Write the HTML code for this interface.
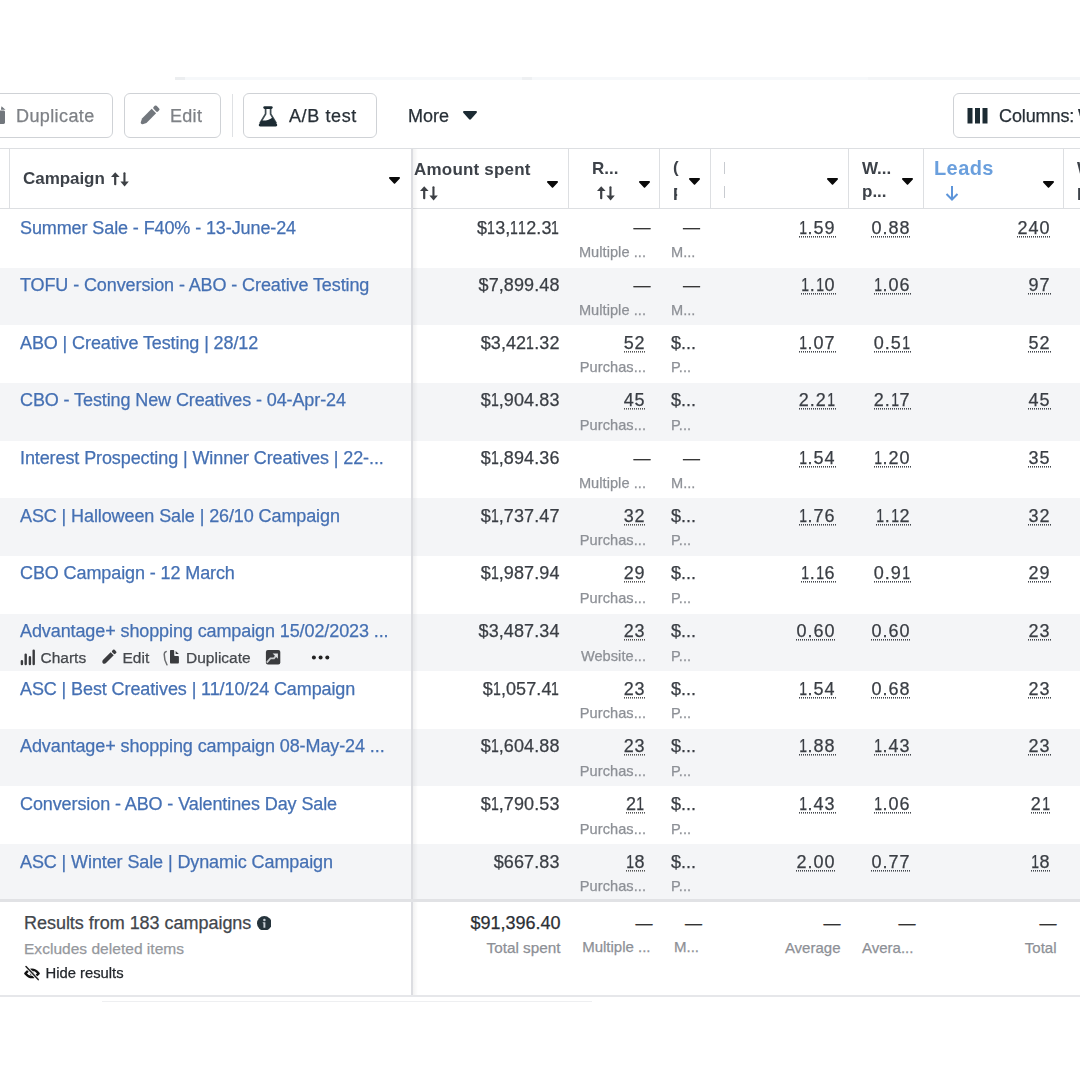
<!DOCTYPE html>
<html><head><meta charset="utf-8"><style>
html,body{margin:0;padding:0;}
body{width:1080px;height:1080px;position:relative;overflow:hidden;background:#fff;filter:blur(0.4px);font-family:"Liberation Sans", sans-serif;}
.t{position:absolute;white-space:nowrap;-webkit-text-stroke:0.25px currentColor;}
.r{position:absolute;}
</style></head><body>
<div class="r" style="left:175px;top:77px;width:905px;height:3px;background:#f6f8fa;"></div>
<div class="r" style="left:175px;top:77px;width:10px;height:3px;background:#eceef0;"></div>
<div class="r" style="left:522px;top:77px;width:10px;height:3px;background:#eef0f2;"></div>
<div class="r" style="left:868px;top:77px;width:212px;height:3px;background:#f3f5f7;"></div>
<div class="r" style="left:-20px;top:93px;width:133px;height:45px;border:1px solid #cfd2d6;border-radius:6px;box-sizing:border-box;background:#fff;"></div>
<div class="r" style="left:124px;top:93px;width:97px;height:45px;border:1px solid #cfd2d6;border-radius:6px;box-sizing:border-box;background:#fff;"></div>
<div class="r" style="left:232px;top:94px;width:1px;height:43px;background:#dfe1e4;"></div>
<div class="r" style="left:243px;top:93px;width:134px;height:45px;border:1px solid #cfd2d6;border-radius:6px;box-sizing:border-box;background:#fff;"></div>
<div class="r" style="left:953px;top:93px;width:160px;height:45px;border:1px solid #cfd2d6;border-radius:6px;box-sizing:border-box;background:#fff;"></div>
<div class="t" style="left:16px;top:104.51px;font-size:18px;line-height:22.5px;color:#7e8186;letter-spacing:0.4px;">Duplicate</div>
<div class="t" style="left:170px;top:104.51px;font-size:18px;line-height:22.5px;color:#7e8186;letter-spacing:0.3px;">Edit</div>
<div class="t" style="left:289px;top:104.51px;font-size:18px;line-height:22.5px;color:#283037;letter-spacing:0.6px;">A/B test</div>
<div class="t" style="left:408px;top:104.51px;font-size:18px;line-height:22.5px;color:#283037;">More</div>
<div class="t" style="left:999px;top:104.51px;font-size:18px;line-height:22.5px;color:#283037;letter-spacing:-0.1px;">Columns:</div>
<div class="t" style="left:1078px;top:104.51px;font-size:18px;line-height:22.5px;color:#283037;">W</div>
<svg class="r" style="left:-12px;top:105px" width="20" height="20" viewBox="0 0 20 20"><path d="M2 5.5h13.6c.8 0 1.4.6 1.4 1.4v10.7c0 .8-.6 1.4-1.4 1.4H2z" fill="#72777d"/><path d="M13.5 1.2l4 3.6h-4.6z" fill="#72777d"/></svg>
<svg class="r" style="left:137.3px;top:103.9px" width="24" height="24" viewBox="-12 -12 24 24"><g transform="rotate(45) scale(1.12)" fill="#72777d"><rect x="-2.8" y="-11.2" width="5.6" height="3.8" rx="1.2"/><path d="M-2.8 -6.2h5.6v12.2l-1.6 3.2c-.5.9-1.9.9-2.4 0l-1.6-3.2z"/></g></svg>
<svg class="r" style="left:258px;top:104.5px" width="20" height="22" viewBox="0 0 20 22"><g fill="none" stroke="#1c2b33"><path d="M6.7 2.6h6.6" stroke-width="2.8" stroke-linecap="round"/><path d="M7.6 3v6L2 18.2M12.6 3v6l5.6 9.2" stroke-width="1.7" opacity=".85"/></g><path d="M3.8 15.3Q8 16.6 14.6 12.4L19 19.2c.6 1.1 0 2.2-1.3 2.2H2.3c-1.3 0-1.9-1.1-1.3-2.2z" fill="#1c2b33"/></svg>
<svg class="r" style="left:463px;top:111px" width="14" height="9" viewBox="0 0 14 9"><path d="M1.2 0h11.6c1 0 1.5 1.1.9 1.8L7.9 8.3c-.5.5-1.3.5-1.8 0L.3 1.8C-.3 1.1.2 0 1.2 0z" fill="#1c2b33"/></svg>
<svg class="r" style="left:967px;top:108px" width="22" height="16" viewBox="0 0 22 16"><rect x="0.5" y="0" width="5" height="15.5" fill="#1c2b33"/><rect x="8" y="0" width="5" height="15.5" fill="#1c2b33"/><rect x="15.5" y="0" width="5" height="15.5" fill="#1c2b33"/></svg>
<div class="r" style="left:0px;top:148px;width:1080px;height:1px;background:#dddfe2;"></div>
<div class="r" style="left:0px;top:208px;width:1080px;height:1px;background:#dddfe2;"></div>
<div class="r" style="left:9px;top:149px;width:1px;height:59px;background:#dddfe2;"></div>
<div class="r" style="left:568px;top:149px;width:1px;height:59px;background:#dddfe2;"></div>
<div class="r" style="left:659px;top:149px;width:1px;height:59px;background:#dddfe2;"></div>
<div class="r" style="left:710px;top:149px;width:1px;height:59px;background:#dddfe2;"></div>
<div class="r" style="left:848px;top:149px;width:1px;height:59px;background:#dddfe2;"></div>
<div class="r" style="left:923px;top:149px;width:1px;height:59px;background:#dddfe2;"></div>
<div class="r" style="left:1063px;top:149px;width:1px;height:59px;background:#dddfe2;"></div>
<div class="t" style="left:23px;top:168.08px;font-size:17px;line-height:21.25px;color:#3d4249;font-weight:700;-webkit-text-stroke:0;letter-spacing:-0.05px;">Campaign</div>
<svg class="r" style="left:111.1px;top:172px" width="19" height="15" viewBox="0 0 19 15"><g fill="#3d4045"><path d="M0 4.9L4.2 0.2 8.6 4.9z"/><rect x="3.1" y="4" width="2.2" height="9.2" rx="1"/><rect x="12.4" y="0.3" width="2.1" height="10" rx="1"/><path d="M9.4 9.4h8.4l-4.2 5z"/></g></svg>
<svg class="r" style="left:389px;top:177px" width="11" height="7" viewBox="0 0 11 7"><path d="M.9 0h9.2c.8 0 1.2.9.7 1.4L6.1 6.5c-.3.4-.9.4-1.2 0L.2 1.4C-.3.9.1 0 .9 0z" fill="#0a0a0a"/></svg>
<div class="t" style="left:414px;top:158.68px;font-size:17px;line-height:21.25px;color:#3d4249;font-weight:700;-webkit-text-stroke:0;letter-spacing:0.2px;">Amount spent</div>
<svg class="r" style="left:419.6px;top:186.2px" width="19" height="15" viewBox="0 0 19 15"><g fill="#3d4045"><path d="M0 4.9L4.2 0.2 8.6 4.9z"/><rect x="3.1" y="4" width="2.2" height="9.2" rx="1"/><rect x="12.4" y="0.3" width="2.1" height="10" rx="1"/><path d="M9.4 9.4h8.4l-4.2 5z"/></g></svg>
<svg class="r" style="left:546.5px;top:180.5px" width="11" height="7" viewBox="0 0 11 7"><path d="M.9 0h9.2c.8 0 1.2.9.7 1.4L6.1 6.5c-.3.4-.9.4-1.2 0L.2 1.4C-.3.9.1 0 .9 0z" fill="#0a0a0a"/></svg>
<div class="t" style="left:592px;top:158.18px;font-size:17px;line-height:21.25px;color:#3d4249;font-weight:700;-webkit-text-stroke:0;">R...</div>
<svg class="r" style="left:597.4px;top:186.2px" width="19" height="15" viewBox="0 0 19 15"><g fill="#3d4045"><path d="M0 4.9L4.2 0.2 8.6 4.9z"/><rect x="3.1" y="4" width="2.2" height="9.2" rx="1"/><rect x="12.4" y="0.3" width="2.1" height="10" rx="1"/><path d="M9.4 9.4h8.4l-4.2 5z"/></g></svg>
<svg class="r" style="left:638.5px;top:180.5px" width="11" height="7" viewBox="0 0 11 7"><path d="M.9 0h9.2c.8 0 1.2.9.7 1.4L6.1 6.5c-.3.4-.9.4-1.2 0L.2 1.4C-.3.9.1 0 .9 0z" fill="#0a0a0a"/></svg>
<div class="t" style="left:673px;top:157.48px;font-size:17px;line-height:21.25px;color:#3d4249;font-weight:700;-webkit-text-stroke:0;">(</div>
<div class="t" style="left:673px;top:184.48px;font-size:17px;line-height:21.25px;color:#3d4249;font-weight:700;-webkit-text-stroke:0;clip-path:inset(0 60% 0 0);">F</div>
<svg class="r" style="left:688.5px;top:178px" width="11" height="7" viewBox="0 0 11 7"><path d="M.9 0h9.2c.8 0 1.2.9.7 1.4L6.1 6.5c-.3.4-.9.4-1.2 0L.2 1.4C-.3.9.1 0 .9 0z" fill="#0a0a0a"/></svg>
<div class="r" style="left:724px;top:162px;width:1px;height:12px;background:#c8cbd0;"></div>
<div class="r" style="left:724px;top:186px;width:1px;height:12px;background:#c8cbd0;"></div>
<svg class="r" style="left:826.5px;top:178px" width="11" height="7" viewBox="0 0 11 7"><path d="M.9 0h9.2c.8 0 1.2.9.7 1.4L6.1 6.5c-.3.4-.9.4-1.2 0L.2 1.4C-.3.9.1 0 .9 0z" fill="#0a0a0a"/></svg>
<div class="t" style="left:862px;top:158.08px;font-size:17px;line-height:21.25px;color:#3d4249;font-weight:700;-webkit-text-stroke:0;">W...</div>
<div class="t" style="left:862px;top:180.98px;font-size:17px;line-height:21.25px;color:#3d4249;font-weight:700;-webkit-text-stroke:0;">p...</div>
<svg class="r" style="left:901.5px;top:178px" width="11" height="7" viewBox="0 0 11 7"><path d="M.9 0h9.2c.8 0 1.2.9.7 1.4L6.1 6.5c-.3.4-.9.4-1.2 0L.2 1.4C-.3.9.1 0 .9 0z" fill="#0a0a0a"/></svg>
<div class="t" style="left:934px;top:156.37px;font-size:20px;line-height:25.0px;color:#6a9fdd;font-weight:700;-webkit-text-stroke:0;letter-spacing:0.4px;">Leads</div>
<svg class="r" style="left:945px;top:185px" width="14" height="16" viewBox="0 0 14 16"><path d="M7 1v13.5M1.5 9l5.5 5.5L12.5 9" stroke="#5d95da" stroke-width="2" fill="none"/></svg>
<svg class="r" style="left:1042.5px;top:181px" width="11" height="7" viewBox="0 0 11 7"><path d="M.9 0h9.2c.8 0 1.2.9.7 1.4L6.1 6.5c-.3.4-.9.4-1.2 0L.2 1.4C-.3.9.1 0 .9 0z" fill="#0a0a0a"/></svg>
<div class="t" style="left:1077px;top:158.48px;font-size:17px;line-height:21.25px;color:#3d4249;font-weight:700;-webkit-text-stroke:0;">W</div>
<div class="t" style="left:1077px;top:184.48px;font-size:17px;line-height:21.25px;color:#3d4249;font-weight:700;-webkit-text-stroke:0;">D</div>
<div class="r" style="left:0;top:267.65px;width:1080px;height:57.65px;background:#f4f5f7;"></div>
<div class="r" style="left:0;top:382.95px;width:1080px;height:57.65px;background:#f4f5f7;"></div>
<div class="r" style="left:0;top:498.25px;width:1080px;height:57.65px;background:#f4f5f7;"></div>
<div class="r" style="left:0;top:613.55px;width:1080px;height:57.65px;background:#f4f5f7;"></div>
<div class="r" style="left:0;top:728.85px;width:1080px;height:57.65px;background:#f4f5f7;"></div>
<div class="r" style="left:0;top:844.15px;width:1080px;height:57.65px;background:#f4f5f7;"></div>
<div class="t" style="left:20px;top:216.51px;font-size:18px;line-height:22.5px;color:#4570b3;letter-spacing:-0.1px;">Summer Sale - F40% - 13-June-24</div>
<div class="t" style="right:520.5px;text-align:right;top:216.51px;font-size:18px;line-height:22.5px;color:#3a3e44;letter-spacing:0.1px;">$<span style="display:inline-block;transform:scaleX(0.78);margin:0 -1.1px">1</span>3,<span style="display:inline-block;transform:scaleX(0.78);margin:0 -1.1px">1</span><span style="display:inline-block;transform:scaleX(0.78);margin:0 -1.1px">1</span>2.3<span style="display:inline-block;transform:scaleX(0.78);margin:0 -1.1px">1</span></div>
<div class="t" style="right:429.5px;text-align:right;top:217.48px;font-size:17px;line-height:21.25px;color:#333;">—</div>
<div class="t" style="right:380px;text-align:right;top:217.48px;font-size:17px;line-height:21.25px;color:#333;">—</div>
<div class="t" style="right:434px;text-align:right;top:243.12px;font-size:14.6px;line-height:18.25px;color:#8d9096;letter-spacing:0.05px;">Multiple ...</div>
<div class="t" style="left:671px;top:243.12px;font-size:14.6px;line-height:18.25px;color:#8d9096;">M...</div>
<div class="t" style="right:244.5px;text-align:right;top:216.51px;font-size:18px;line-height:22.5px;color:#3a3e44;letter-spacing:1.0px;"><span style="background:repeating-linear-gradient(90deg,#43474d 0 1px,transparent 1px 2px) left calc(100% - 0.4px)/100% 1.6px no-repeat;"><span style="display:inline-block;transform:scaleX(0.78);margin:0 -1.1px">1</span>.59</span></div>
<div class="t" style="right:169.5px;text-align:right;top:216.51px;font-size:18px;line-height:22.5px;color:#3a3e44;letter-spacing:1.0px;"><span style="background:repeating-linear-gradient(90deg,#43474d 0 1px,transparent 1px 2px) left calc(100% - 0.4px)/100% 1.6px no-repeat;">0.88</span></div>
<div class="t" style="right:29.5px;text-align:right;top:216.51px;font-size:18px;line-height:22.5px;color:#3a3e44;letter-spacing:1.0px;"><span style="background:repeating-linear-gradient(90deg,#43474d 0 1px,transparent 1px 2px) left calc(100% - 0.4px)/100% 1.6px no-repeat;">240</span></div>
<div class="t" style="left:20px;top:274.16px;font-size:18px;line-height:22.5px;color:#4570b3;letter-spacing:-0.1px;">TOFU - Conversion - ABO - Creative Testing</div>
<div class="t" style="right:520.5px;text-align:right;top:274.16px;font-size:18px;line-height:22.5px;color:#3a3e44;letter-spacing:0.1px;">$7,899.48</div>
<div class="t" style="right:429.5px;text-align:right;top:275.13px;font-size:17px;line-height:21.25px;color:#333;">—</div>
<div class="t" style="right:380px;text-align:right;top:275.13px;font-size:17px;line-height:21.25px;color:#333;">—</div>
<div class="t" style="right:434px;text-align:right;top:300.77px;font-size:14.6px;line-height:18.25px;color:#8d9096;letter-spacing:0.05px;">Multiple ...</div>
<div class="t" style="left:671px;top:300.77px;font-size:14.6px;line-height:18.25px;color:#8d9096;">M...</div>
<div class="t" style="right:244.5px;text-align:right;top:274.16px;font-size:18px;line-height:22.5px;color:#3a3e44;letter-spacing:1.0px;"><span style="background:repeating-linear-gradient(90deg,#43474d 0 1px,transparent 1px 2px) left calc(100% - 0.4px)/100% 1.6px no-repeat;"><span style="display:inline-block;transform:scaleX(0.78);margin:0 -1.1px">1</span>.<span style="display:inline-block;transform:scaleX(0.78);margin:0 -1.1px">1</span>0</span></div>
<div class="t" style="right:169.5px;text-align:right;top:274.16px;font-size:18px;line-height:22.5px;color:#3a3e44;letter-spacing:1.0px;"><span style="background:repeating-linear-gradient(90deg,#43474d 0 1px,transparent 1px 2px) left calc(100% - 0.4px)/100% 1.6px no-repeat;"><span style="display:inline-block;transform:scaleX(0.78);margin:0 -1.1px">1</span>.06</span></div>
<div class="t" style="right:29.5px;text-align:right;top:274.16px;font-size:18px;line-height:22.5px;color:#3a3e44;letter-spacing:1.0px;"><span style="background:repeating-linear-gradient(90deg,#43474d 0 1px,transparent 1px 2px) left calc(100% - 0.4px)/100% 1.6px no-repeat;">97</span></div>
<div class="t" style="left:20px;top:331.81px;font-size:18px;line-height:22.5px;color:#4570b3;letter-spacing:-0.1px;">ABO | Creative Testing | 28/12</div>
<div class="t" style="right:520.5px;text-align:right;top:331.81px;font-size:18px;line-height:22.5px;color:#3a3e44;letter-spacing:0.1px;">$3,42<span style="display:inline-block;transform:scaleX(0.78);margin:0 -1.1px">1</span>.32</div>
<div class="t" style="right:435px;text-align:right;top:331.81px;font-size:18px;line-height:22.5px;color:#3a3e44;letter-spacing:0.6px;"><span style="background:repeating-linear-gradient(90deg,#555 0 1px,transparent 1px 2px) left calc(100% - 0.4px)/100% 1.6px no-repeat;">52</span><span style="letter-spacing:0">&#8203;</span></div>
<div class="t" style="left:671px;top:331.81px;font-size:18px;line-height:22.5px;color:#3a3e44;">$...</div>
<div class="t" style="right:434px;text-align:right;top:358.42px;font-size:14.6px;line-height:18.25px;color:#8d9096;letter-spacing:0.05px;">Purchas...</div>
<div class="t" style="left:671px;top:358.42px;font-size:14.6px;line-height:18.25px;color:#8d9096;">P...</div>
<div class="t" style="right:244.5px;text-align:right;top:331.81px;font-size:18px;line-height:22.5px;color:#3a3e44;letter-spacing:1.0px;"><span style="background:repeating-linear-gradient(90deg,#43474d 0 1px,transparent 1px 2px) left calc(100% - 0.4px)/100% 1.6px no-repeat;"><span style="display:inline-block;transform:scaleX(0.78);margin:0 -1.1px">1</span>.07</span></div>
<div class="t" style="right:169.5px;text-align:right;top:331.81px;font-size:18px;line-height:22.5px;color:#3a3e44;letter-spacing:1.0px;"><span style="background:repeating-linear-gradient(90deg,#43474d 0 1px,transparent 1px 2px) left calc(100% - 0.4px)/100% 1.6px no-repeat;">0.5<span style="display:inline-block;transform:scaleX(0.78);margin:0 -1.1px">1</span></span></div>
<div class="t" style="right:29.5px;text-align:right;top:331.81px;font-size:18px;line-height:22.5px;color:#3a3e44;letter-spacing:1.0px;"><span style="background:repeating-linear-gradient(90deg,#43474d 0 1px,transparent 1px 2px) left calc(100% - 0.4px)/100% 1.6px no-repeat;">52</span></div>
<div class="t" style="left:20px;top:389.46px;font-size:18px;line-height:22.5px;color:#4570b3;letter-spacing:-0.1px;">CBO - Testing New Creatives - 04-Apr-24</div>
<div class="t" style="right:520.5px;text-align:right;top:389.46px;font-size:18px;line-height:22.5px;color:#3a3e44;letter-spacing:0.1px;">$<span style="display:inline-block;transform:scaleX(0.78);margin:0 -1.1px">1</span>,904.83</div>
<div class="t" style="right:435px;text-align:right;top:389.46px;font-size:18px;line-height:22.5px;color:#3a3e44;letter-spacing:0.6px;"><span style="background:repeating-linear-gradient(90deg,#555 0 1px,transparent 1px 2px) left calc(100% - 0.4px)/100% 1.6px no-repeat;">45</span><span style="letter-spacing:0">&#8203;</span></div>
<div class="t" style="left:671px;top:389.46px;font-size:18px;line-height:22.5px;color:#3a3e44;">$...</div>
<div class="t" style="right:434px;text-align:right;top:416.07px;font-size:14.6px;line-height:18.25px;color:#8d9096;letter-spacing:0.05px;">Purchas...</div>
<div class="t" style="left:671px;top:416.07px;font-size:14.6px;line-height:18.25px;color:#8d9096;">P...</div>
<div class="t" style="right:244.5px;text-align:right;top:389.46px;font-size:18px;line-height:22.5px;color:#3a3e44;letter-spacing:1.0px;"><span style="background:repeating-linear-gradient(90deg,#43474d 0 1px,transparent 1px 2px) left calc(100% - 0.4px)/100% 1.6px no-repeat;">2.2<span style="display:inline-block;transform:scaleX(0.78);margin:0 -1.1px">1</span></span></div>
<div class="t" style="right:169.5px;text-align:right;top:389.46px;font-size:18px;line-height:22.5px;color:#3a3e44;letter-spacing:1.0px;"><span style="background:repeating-linear-gradient(90deg,#43474d 0 1px,transparent 1px 2px) left calc(100% - 0.4px)/100% 1.6px no-repeat;">2.<span style="display:inline-block;transform:scaleX(0.78);margin:0 -1.1px">1</span>7</span></div>
<div class="t" style="right:29.5px;text-align:right;top:389.46px;font-size:18px;line-height:22.5px;color:#3a3e44;letter-spacing:1.0px;"><span style="background:repeating-linear-gradient(90deg,#43474d 0 1px,transparent 1px 2px) left calc(100% - 0.4px)/100% 1.6px no-repeat;">45</span></div>
<div class="t" style="left:20px;top:447.11px;font-size:18px;line-height:22.5px;color:#4570b3;letter-spacing:-0.1px;">Interest Prospecting | Winner Creatives | 22-...</div>
<div class="t" style="right:520.5px;text-align:right;top:447.11px;font-size:18px;line-height:22.5px;color:#3a3e44;letter-spacing:0.1px;">$<span style="display:inline-block;transform:scaleX(0.78);margin:0 -1.1px">1</span>,894.36</div>
<div class="t" style="right:429.5px;text-align:right;top:448.08px;font-size:17px;line-height:21.25px;color:#333;">—</div>
<div class="t" style="right:380px;text-align:right;top:448.08px;font-size:17px;line-height:21.25px;color:#333;">—</div>
<div class="t" style="right:434px;text-align:right;top:473.72px;font-size:14.6px;line-height:18.25px;color:#8d9096;letter-spacing:0.05px;">Multiple ...</div>
<div class="t" style="left:671px;top:473.72px;font-size:14.6px;line-height:18.25px;color:#8d9096;">M...</div>
<div class="t" style="right:244.5px;text-align:right;top:447.11px;font-size:18px;line-height:22.5px;color:#3a3e44;letter-spacing:1.0px;"><span style="background:repeating-linear-gradient(90deg,#43474d 0 1px,transparent 1px 2px) left calc(100% - 0.4px)/100% 1.6px no-repeat;"><span style="display:inline-block;transform:scaleX(0.78);margin:0 -1.1px">1</span>.54</span></div>
<div class="t" style="right:169.5px;text-align:right;top:447.11px;font-size:18px;line-height:22.5px;color:#3a3e44;letter-spacing:1.0px;"><span style="background:repeating-linear-gradient(90deg,#43474d 0 1px,transparent 1px 2px) left calc(100% - 0.4px)/100% 1.6px no-repeat;"><span style="display:inline-block;transform:scaleX(0.78);margin:0 -1.1px">1</span>.20</span></div>
<div class="t" style="right:29.5px;text-align:right;top:447.11px;font-size:18px;line-height:22.5px;color:#3a3e44;letter-spacing:1.0px;"><span style="background:repeating-linear-gradient(90deg,#43474d 0 1px,transparent 1px 2px) left calc(100% - 0.4px)/100% 1.6px no-repeat;">35</span></div>
<div class="t" style="left:20px;top:504.76px;font-size:18px;line-height:22.5px;color:#4570b3;letter-spacing:-0.1px;">ASC | Halloween Sale | 26/10 Campaign</div>
<div class="t" style="right:520.5px;text-align:right;top:504.76px;font-size:18px;line-height:22.5px;color:#3a3e44;letter-spacing:0.1px;">$<span style="display:inline-block;transform:scaleX(0.78);margin:0 -1.1px">1</span>,737.47</div>
<div class="t" style="right:435px;text-align:right;top:504.76px;font-size:18px;line-height:22.5px;color:#3a3e44;letter-spacing:0.6px;"><span style="background:repeating-linear-gradient(90deg,#555 0 1px,transparent 1px 2px) left calc(100% - 0.4px)/100% 1.6px no-repeat;">32</span><span style="letter-spacing:0">&#8203;</span></div>
<div class="t" style="left:671px;top:504.76px;font-size:18px;line-height:22.5px;color:#3a3e44;">$...</div>
<div class="t" style="right:434px;text-align:right;top:531.37px;font-size:14.6px;line-height:18.25px;color:#8d9096;letter-spacing:0.05px;">Purchas...</div>
<div class="t" style="left:671px;top:531.37px;font-size:14.6px;line-height:18.25px;color:#8d9096;">P...</div>
<div class="t" style="right:244.5px;text-align:right;top:504.76px;font-size:18px;line-height:22.5px;color:#3a3e44;letter-spacing:1.0px;"><span style="background:repeating-linear-gradient(90deg,#43474d 0 1px,transparent 1px 2px) left calc(100% - 0.4px)/100% 1.6px no-repeat;"><span style="display:inline-block;transform:scaleX(0.78);margin:0 -1.1px">1</span>.76</span></div>
<div class="t" style="right:169.5px;text-align:right;top:504.76px;font-size:18px;line-height:22.5px;color:#3a3e44;letter-spacing:1.0px;"><span style="background:repeating-linear-gradient(90deg,#43474d 0 1px,transparent 1px 2px) left calc(100% - 0.4px)/100% 1.6px no-repeat;"><span style="display:inline-block;transform:scaleX(0.78);margin:0 -1.1px">1</span>.<span style="display:inline-block;transform:scaleX(0.78);margin:0 -1.1px">1</span>2</span></div>
<div class="t" style="right:29.5px;text-align:right;top:504.76px;font-size:18px;line-height:22.5px;color:#3a3e44;letter-spacing:1.0px;"><span style="background:repeating-linear-gradient(90deg,#43474d 0 1px,transparent 1px 2px) left calc(100% - 0.4px)/100% 1.6px no-repeat;">32</span></div>
<div class="t" style="left:20px;top:562.41px;font-size:18px;line-height:22.5px;color:#4570b3;letter-spacing:-0.1px;">CBO Campaign - 12 March</div>
<div class="t" style="right:520.5px;text-align:right;top:562.41px;font-size:18px;line-height:22.5px;color:#3a3e44;letter-spacing:0.1px;">$<span style="display:inline-block;transform:scaleX(0.78);margin:0 -1.1px">1</span>,987.94</div>
<div class="t" style="right:435px;text-align:right;top:562.41px;font-size:18px;line-height:22.5px;color:#3a3e44;letter-spacing:0.6px;"><span style="background:repeating-linear-gradient(90deg,#555 0 1px,transparent 1px 2px) left calc(100% - 0.4px)/100% 1.6px no-repeat;">29</span><span style="letter-spacing:0">&#8203;</span></div>
<div class="t" style="left:671px;top:562.41px;font-size:18px;line-height:22.5px;color:#3a3e44;">$...</div>
<div class="t" style="right:434px;text-align:right;top:589.02px;font-size:14.6px;line-height:18.25px;color:#8d9096;letter-spacing:0.05px;">Purchas...</div>
<div class="t" style="left:671px;top:589.02px;font-size:14.6px;line-height:18.25px;color:#8d9096;">P...</div>
<div class="t" style="right:244.5px;text-align:right;top:562.41px;font-size:18px;line-height:22.5px;color:#3a3e44;letter-spacing:1.0px;"><span style="background:repeating-linear-gradient(90deg,#43474d 0 1px,transparent 1px 2px) left calc(100% - 0.4px)/100% 1.6px no-repeat;"><span style="display:inline-block;transform:scaleX(0.78);margin:0 -1.1px">1</span>.<span style="display:inline-block;transform:scaleX(0.78);margin:0 -1.1px">1</span>6</span></div>
<div class="t" style="right:169.5px;text-align:right;top:562.41px;font-size:18px;line-height:22.5px;color:#3a3e44;letter-spacing:1.0px;"><span style="background:repeating-linear-gradient(90deg,#43474d 0 1px,transparent 1px 2px) left calc(100% - 0.4px)/100% 1.6px no-repeat;">0.9<span style="display:inline-block;transform:scaleX(0.78);margin:0 -1.1px">1</span></span></div>
<div class="t" style="right:29.5px;text-align:right;top:562.41px;font-size:18px;line-height:22.5px;color:#3a3e44;letter-spacing:1.0px;"><span style="background:repeating-linear-gradient(90deg,#43474d 0 1px,transparent 1px 2px) left calc(100% - 0.4px)/100% 1.6px no-repeat;">29</span></div>
<div class="t" style="left:20px;top:620.06px;font-size:18px;line-height:22.5px;color:#4570b3;letter-spacing:-0.1px;">Advantage+ shopping campaign 15/02/2023 ...</div>
<div class="t" style="right:520.5px;text-align:right;top:620.06px;font-size:18px;line-height:22.5px;color:#3a3e44;letter-spacing:0.1px;">$3,487.34</div>
<div class="t" style="right:435px;text-align:right;top:620.06px;font-size:18px;line-height:22.5px;color:#3a3e44;letter-spacing:0.6px;"><span style="background:repeating-linear-gradient(90deg,#555 0 1px,transparent 1px 2px) left calc(100% - 0.4px)/100% 1.6px no-repeat;">23</span><span style="letter-spacing:0">&#8203;</span></div>
<div class="t" style="left:671px;top:620.06px;font-size:18px;line-height:22.5px;color:#3a3e44;">$...</div>
<div class="t" style="right:434px;text-align:right;top:646.67px;font-size:14.6px;line-height:18.25px;color:#8d9096;letter-spacing:0.05px;">Website...</div>
<div class="t" style="left:671px;top:646.67px;font-size:14.6px;line-height:18.25px;color:#8d9096;">P...</div>
<div class="t" style="right:244.5px;text-align:right;top:620.06px;font-size:18px;line-height:22.5px;color:#3a3e44;letter-spacing:1.0px;"><span style="background:repeating-linear-gradient(90deg,#43474d 0 1px,transparent 1px 2px) left calc(100% - 0.4px)/100% 1.6px no-repeat;">0.60</span></div>
<div class="t" style="right:169.5px;text-align:right;top:620.06px;font-size:18px;line-height:22.5px;color:#3a3e44;letter-spacing:1.0px;"><span style="background:repeating-linear-gradient(90deg,#43474d 0 1px,transparent 1px 2px) left calc(100% - 0.4px)/100% 1.6px no-repeat;">0.60</span></div>
<div class="t" style="right:29.5px;text-align:right;top:620.06px;font-size:18px;line-height:22.5px;color:#3a3e44;letter-spacing:1.0px;"><span style="background:repeating-linear-gradient(90deg,#43474d 0 1px,transparent 1px 2px) left calc(100% - 0.4px)/100% 1.6px no-repeat;">23</span></div>
<div class="t" style="left:20px;top:677.71px;font-size:18px;line-height:22.5px;color:#4570b3;letter-spacing:-0.1px;">ASC | Best Creatives | 11/10/24 Campaign</div>
<div class="t" style="right:520.5px;text-align:right;top:677.71px;font-size:18px;line-height:22.5px;color:#3a3e44;letter-spacing:0.1px;">$<span style="display:inline-block;transform:scaleX(0.78);margin:0 -1.1px">1</span>,057.4<span style="display:inline-block;transform:scaleX(0.78);margin:0 -1.1px">1</span></div>
<div class="t" style="right:435px;text-align:right;top:677.71px;font-size:18px;line-height:22.5px;color:#3a3e44;letter-spacing:0.6px;"><span style="background:repeating-linear-gradient(90deg,#555 0 1px,transparent 1px 2px) left calc(100% - 0.4px)/100% 1.6px no-repeat;">23</span><span style="letter-spacing:0">&#8203;</span></div>
<div class="t" style="left:671px;top:677.71px;font-size:18px;line-height:22.5px;color:#3a3e44;">$...</div>
<div class="t" style="right:434px;text-align:right;top:704.32px;font-size:14.6px;line-height:18.25px;color:#8d9096;letter-spacing:0.05px;">Purchas...</div>
<div class="t" style="left:671px;top:704.32px;font-size:14.6px;line-height:18.25px;color:#8d9096;">P...</div>
<div class="t" style="right:244.5px;text-align:right;top:677.71px;font-size:18px;line-height:22.5px;color:#3a3e44;letter-spacing:1.0px;"><span style="background:repeating-linear-gradient(90deg,#43474d 0 1px,transparent 1px 2px) left calc(100% - 0.4px)/100% 1.6px no-repeat;"><span style="display:inline-block;transform:scaleX(0.78);margin:0 -1.1px">1</span>.54</span></div>
<div class="t" style="right:169.5px;text-align:right;top:677.71px;font-size:18px;line-height:22.5px;color:#3a3e44;letter-spacing:1.0px;"><span style="background:repeating-linear-gradient(90deg,#43474d 0 1px,transparent 1px 2px) left calc(100% - 0.4px)/100% 1.6px no-repeat;">0.68</span></div>
<div class="t" style="right:29.5px;text-align:right;top:677.71px;font-size:18px;line-height:22.5px;color:#3a3e44;letter-spacing:1.0px;"><span style="background:repeating-linear-gradient(90deg,#43474d 0 1px,transparent 1px 2px) left calc(100% - 0.4px)/100% 1.6px no-repeat;">23</span></div>
<div class="t" style="left:20px;top:735.36px;font-size:18px;line-height:22.5px;color:#4570b3;letter-spacing:-0.1px;">Advantage+ shopping campaign 08-May-24 ...</div>
<div class="t" style="right:520.5px;text-align:right;top:735.36px;font-size:18px;line-height:22.5px;color:#3a3e44;letter-spacing:0.1px;">$<span style="display:inline-block;transform:scaleX(0.78);margin:0 -1.1px">1</span>,604.88</div>
<div class="t" style="right:435px;text-align:right;top:735.36px;font-size:18px;line-height:22.5px;color:#3a3e44;letter-spacing:0.6px;"><span style="background:repeating-linear-gradient(90deg,#555 0 1px,transparent 1px 2px) left calc(100% - 0.4px)/100% 1.6px no-repeat;">23</span><span style="letter-spacing:0">&#8203;</span></div>
<div class="t" style="left:671px;top:735.36px;font-size:18px;line-height:22.5px;color:#3a3e44;">$...</div>
<div class="t" style="right:434px;text-align:right;top:761.97px;font-size:14.6px;line-height:18.25px;color:#8d9096;letter-spacing:0.05px;">Purchas...</div>
<div class="t" style="left:671px;top:761.97px;font-size:14.6px;line-height:18.25px;color:#8d9096;">P...</div>
<div class="t" style="right:244.5px;text-align:right;top:735.36px;font-size:18px;line-height:22.5px;color:#3a3e44;letter-spacing:1.0px;"><span style="background:repeating-linear-gradient(90deg,#43474d 0 1px,transparent 1px 2px) left calc(100% - 0.4px)/100% 1.6px no-repeat;"><span style="display:inline-block;transform:scaleX(0.78);margin:0 -1.1px">1</span>.88</span></div>
<div class="t" style="right:169.5px;text-align:right;top:735.36px;font-size:18px;line-height:22.5px;color:#3a3e44;letter-spacing:1.0px;"><span style="background:repeating-linear-gradient(90deg,#43474d 0 1px,transparent 1px 2px) left calc(100% - 0.4px)/100% 1.6px no-repeat;"><span style="display:inline-block;transform:scaleX(0.78);margin:0 -1.1px">1</span>.43</span></div>
<div class="t" style="right:29.5px;text-align:right;top:735.36px;font-size:18px;line-height:22.5px;color:#3a3e44;letter-spacing:1.0px;"><span style="background:repeating-linear-gradient(90deg,#43474d 0 1px,transparent 1px 2px) left calc(100% - 0.4px)/100% 1.6px no-repeat;">23</span></div>
<div class="t" style="left:20px;top:793.01px;font-size:18px;line-height:22.5px;color:#4570b3;letter-spacing:-0.1px;">Conversion - ABO - Valentines Day Sale</div>
<div class="t" style="right:520.5px;text-align:right;top:793.01px;font-size:18px;line-height:22.5px;color:#3a3e44;letter-spacing:0.1px;">$<span style="display:inline-block;transform:scaleX(0.78);margin:0 -1.1px">1</span>,790.53</div>
<div class="t" style="right:435px;text-align:right;top:793.01px;font-size:18px;line-height:22.5px;color:#3a3e44;letter-spacing:0.6px;"><span style="background:repeating-linear-gradient(90deg,#555 0 1px,transparent 1px 2px) left calc(100% - 0.4px)/100% 1.6px no-repeat;">2<span style="display:inline-block;transform:scaleX(0.78);margin:0 -1.1px">1</span></span><span style="letter-spacing:0">&#8203;</span></div>
<div class="t" style="left:671px;top:793.01px;font-size:18px;line-height:22.5px;color:#3a3e44;">$...</div>
<div class="t" style="right:434px;text-align:right;top:819.62px;font-size:14.6px;line-height:18.25px;color:#8d9096;letter-spacing:0.05px;">Purchas...</div>
<div class="t" style="left:671px;top:819.62px;font-size:14.6px;line-height:18.25px;color:#8d9096;">P...</div>
<div class="t" style="right:244.5px;text-align:right;top:793.01px;font-size:18px;line-height:22.5px;color:#3a3e44;letter-spacing:1.0px;"><span style="background:repeating-linear-gradient(90deg,#43474d 0 1px,transparent 1px 2px) left calc(100% - 0.4px)/100% 1.6px no-repeat;"><span style="display:inline-block;transform:scaleX(0.78);margin:0 -1.1px">1</span>.43</span></div>
<div class="t" style="right:169.5px;text-align:right;top:793.01px;font-size:18px;line-height:22.5px;color:#3a3e44;letter-spacing:1.0px;"><span style="background:repeating-linear-gradient(90deg,#43474d 0 1px,transparent 1px 2px) left calc(100% - 0.4px)/100% 1.6px no-repeat;"><span style="display:inline-block;transform:scaleX(0.78);margin:0 -1.1px">1</span>.06</span></div>
<div class="t" style="right:29.5px;text-align:right;top:793.01px;font-size:18px;line-height:22.5px;color:#3a3e44;letter-spacing:1.0px;"><span style="background:repeating-linear-gradient(90deg,#43474d 0 1px,transparent 1px 2px) left calc(100% - 0.4px)/100% 1.6px no-repeat;">2<span style="display:inline-block;transform:scaleX(0.78);margin:0 -1.1px">1</span></span></div>
<div class="t" style="left:20px;top:850.66px;font-size:18px;line-height:22.5px;color:#4570b3;letter-spacing:-0.1px;">ASC | Winter Sale | Dynamic Campaign</div>
<div class="t" style="right:520.5px;text-align:right;top:850.66px;font-size:18px;line-height:22.5px;color:#3a3e44;letter-spacing:0.1px;">$667.83</div>
<div class="t" style="right:435px;text-align:right;top:850.66px;font-size:18px;line-height:22.5px;color:#3a3e44;letter-spacing:0.6px;"><span style="background:repeating-linear-gradient(90deg,#555 0 1px,transparent 1px 2px) left calc(100% - 0.4px)/100% 1.6px no-repeat;"><span style="display:inline-block;transform:scaleX(0.78);margin:0 -1.1px">1</span>8</span><span style="letter-spacing:0">&#8203;</span></div>
<div class="t" style="left:671px;top:850.66px;font-size:18px;line-height:22.5px;color:#3a3e44;">$...</div>
<div class="t" style="right:434px;text-align:right;top:877.27px;font-size:14.6px;line-height:18.25px;color:#8d9096;letter-spacing:0.05px;">Purchas...</div>
<div class="t" style="left:671px;top:877.27px;font-size:14.6px;line-height:18.25px;color:#8d9096;">P...</div>
<div class="t" style="right:244.5px;text-align:right;top:850.66px;font-size:18px;line-height:22.5px;color:#3a3e44;letter-spacing:1.0px;"><span style="background:repeating-linear-gradient(90deg,#43474d 0 1px,transparent 1px 2px) left calc(100% - 0.4px)/100% 1.6px no-repeat;">2.00</span></div>
<div class="t" style="right:169.5px;text-align:right;top:850.66px;font-size:18px;line-height:22.5px;color:#3a3e44;letter-spacing:1.0px;"><span style="background:repeating-linear-gradient(90deg,#43474d 0 1px,transparent 1px 2px) left calc(100% - 0.4px)/100% 1.6px no-repeat;">0.77</span></div>
<div class="t" style="right:29.5px;text-align:right;top:850.66px;font-size:18px;line-height:22.5px;color:#3a3e44;letter-spacing:1.0px;"><span style="background:repeating-linear-gradient(90deg,#43474d 0 1px,transparent 1px 2px) left calc(100% - 0.4px)/100% 1.6px no-repeat;"><span style="display:inline-block;transform:scaleX(0.78);margin:0 -1.1px">1</span>8</span></div>
<svg class="r" style="left:0;top:0" width="1080" height="1080" viewBox="0 0 1080 1080"><g stroke="#3a3b3e" stroke-width="2.4" stroke-linecap="round"><path d="M21.9 661.1v3M25.7 654.6v9.4M29.9 657.3v6.7M33.7 650.6v13.4"/></g><g transform="translate(108.8 657.2) rotate(45)" fill="#3a3b3e"><rect x="-2.2" y="-9.3" width="4.4" height="3.4" rx="1.1"/><path d="M-2.2 -4.8h4.4v10.6c0 1.4-1 2.6-2.2 2.6s-2.2-1.2-2.2-2.6z"/></g><path d="M166.2 651.6c-1.6.4-2 1.3-2 2.6 0 4 1.2 8 2.8 10.6" stroke="#6b6d70" stroke-width="1.5" fill="none" stroke-linecap="round"/><path d="M170.8 649.9h2.6c.5 0 .8.3.8.8v4.6c0 .5.3.8.8.8h3.1c.5 0 .8.3.8.8v5.6c0 .5-.3.9-.8.9h-7.3c-.5 0-.8-.4-.8-.9v-11.8c0-.5.3-.8.8-.8z" fill="#3a3b3e"/><path d="M175.6 650.9l3.2 3.2h-3.2z" fill="#3a3b3e"/><rect x="265.9" y="649.9" width="14.4" height="14.7" rx="2" fill="#3a3b3e"/><path d="M266.8 662.6l3.6-4.3h3.6l2.9-3.5" stroke="#c8cacc" stroke-width="1.8" fill="none"/><path d="M272.6 653.4h5.3v5.4z" fill="#e2e4e6"/><g fill="#222"><circle cx="313.9" cy="657.6" r="2"/><circle cx="320.6" cy="657.6" r="2"/><circle cx="327.3" cy="657.6" r="2"/></g></svg>
<div class="t" style="left:40.5px;top:648.29px;font-size:15.5px;line-height:19.38px;color:#45484d;">Charts</div>
<div class="t" style="left:122.5px;top:648.29px;font-size:15.5px;line-height:19.38px;color:#45484d;">Edit</div>
<div class="t" style="left:186px;top:648.29px;font-size:15.5px;line-height:19.38px;color:#45484d;">Duplicate</div>
<div class="r" style="left:411px;top:149px;width:2px;height:847px;background:#dcdde1;"></div>
<div class="r" style="left:413px;top:149px;width:5px;height:847px;background:linear-gradient(to right, rgba(0,0,0,0.05), rgba(0,0,0,0));"></div>
<div class="r" style="left:0px;top:899px;width:1080px;height:3px;background:#e1e2e5;"></div>
<div class="r" style="left:0px;top:902px;width:1080px;height:93px;background:#fff;"></div>
<div class="r" style="left:0px;top:995px;width:1080px;height:2px;background:#e6e7ea;"></div>
<div class="r" style="left:102px;top:1001px;width:490px;height:1px;background:#eeeff1;"></div>
<div class="r" style="left:411px;top:902px;width:2px;height:93px;background:#dcdde1;"></div>
<div class="r" style="left:413px;top:902px;width:5px;height:93px;background:linear-gradient(to right, rgba(0,0,0,0.05), rgba(0,0,0,0));"></div>
<div class="t" style="left:24px;top:912.31px;font-size:18px;line-height:22.5px;color:#42464c;letter-spacing:-0.03px;">Results from 183 campaigns</div>
<svg class="r" style="left:256.9px;top:915.8px" width="14.6" height="14.6" viewBox="0 0 15 15"><circle cx="7.5" cy="7.5" r="7.5" fill="#26343c"/><path d="M5.9 6.3h2.7v5.8H6.6V7.6l-.7-.4z" fill="#c5ccd3"/><circle cx="7.6" cy="4" r="1.3" fill="#c5ccd3"/></svg>
<div class="t" style="left:24px;top:938.54px;font-size:15.5px;line-height:19.38px;color:#95989d;letter-spacing:0.03px;">Excludes deleted items</div>
<svg class="r" style="left:0;top:0" width="60" height="1000" viewBox="0 0 60 1000"><path d="M25.3 973.4Q32 965.8 38.7 973.4Q32 981 25.3 973.4z" stroke="#111" stroke-width="2.3" fill="none" stroke-linejoin="round"/><circle cx="32" cy="973.4" r="2.2" fill="#555"/><path d="M26 966.6L38.2 979.6" stroke="#fff" stroke-width="3"/><path d="M26 966.6L38.2 979.6" stroke="#222" stroke-width="1.5" stroke-linecap="round"/></svg>
<div class="t" style="left:45.5px;top:963.82px;font-size:14.8px;line-height:18.5px;color:#22262b;">Hide results</div>
<div class="t" style="right:519.5px;text-align:right;top:912.31px;font-size:18px;line-height:22.5px;color:#2b2f35;">$91,396.40</div>
<div class="t" style="right:519.5px;text-align:right;top:937.84px;font-size:15.3px;line-height:19.12px;color:#8d9096;">Total spent</div>
<div class="t" style="right:427.5px;text-align:right;top:913.28px;font-size:17px;line-height:21.25px;color:#333;">—</div>
<div class="t" style="right:429.5px;text-align:right;top:938.13px;font-size:15px;line-height:18.75px;color:#8d9096;">Multiple ...</div>
<div class="t" style="right:378px;text-align:right;top:913.28px;font-size:17px;line-height:21.25px;color:#333;">—</div>
<div class="t" style="left:674px;top:938.13px;font-size:15px;line-height:18.75px;color:#8d9096;">M...</div>
<div class="t" style="right:239.5px;text-align:right;top:913.28px;font-size:17px;line-height:21.25px;color:#333;">—</div>
<div class="t" style="right:239.5px;text-align:right;top:939.33px;font-size:15px;line-height:18.75px;color:#8d9096;">Average</div>
<div class="t" style="right:164.5px;text-align:right;top:913.28px;font-size:17px;line-height:21.25px;color:#333;">—</div>
<div class="t" style="left:862px;top:939.33px;font-size:15px;line-height:18.75px;color:#8d9096;">Avera...</div>
<div class="t" style="right:23.5px;text-align:right;top:913.28px;font-size:17px;line-height:21.25px;color:#333;">—</div>
<div class="t" style="right:23.5px;text-align:right;top:939.33px;font-size:15px;line-height:18.75px;color:#8d9096;">Total</div>
</body></html>
